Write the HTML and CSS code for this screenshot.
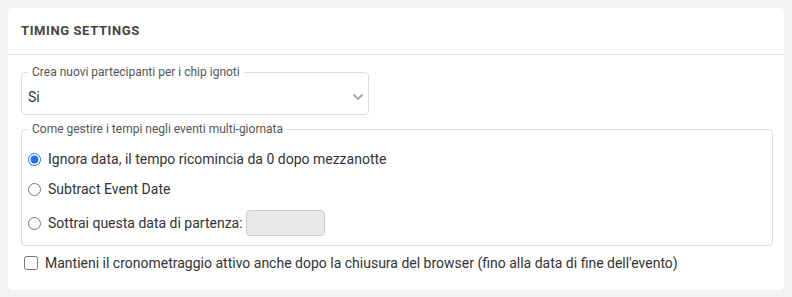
FILE: index.html
```html
<!DOCTYPE html>
<html>

<head>
    <meta charset="UTF-8">
    <title>Timing Settings</title>
    <link rel="stylesheet" href="styles.css">
</head>

<body>
    <div class="card">
        <div class="card-header">Timing Settings</div>
        <div class="card-body">
            <fieldset class="group group-select">
                <legend>Crea nuovi partecipanti per i chip ignoti</legend>
                <div class="select-wrap">
                    <select class="select">
                        <option>Si</option>
                        <option>No</option>
                    </select>
                    <svg class="chevron" width="12" height="8" viewBox="0 0 12 8">
                        <path d="M1.5 1.5 L6 6 L10.5 1.5" fill="none" stroke="#a5a5a5" stroke-width="1.8" />
                    </svg>
                </div>
            </fieldset>

            <fieldset class="group group-radio">
                <legend>Come gestire i tempi negli eventi multi-giornata</legend>
                <label class="option">
                    <input type="radio" name="multiday" checked>
                    <span>Ignora data, il tempo ricomincia da 0 dopo mezzanotte</span>
                </label>
                <label class="option">
                    <input type="radio" name="multiday">
                    <span>Subtract Event Date</span>
                </label>
                <label class="option option-date">
                    <input type="radio" name="multiday">
                    <span>Sottrai questa data di partenza:</span>
                    <input type="text" class="date-input" disabled>
                </label>
            </fieldset>

            <label class="check">
                <input type="checkbox">
                <span>Mantieni il cronometraggio attivo anche dopo la chiusura del browser (fino alla data di fine dell'evento)</span>
            </label>
        </div>
    </div>
</body>

</html>
```

FILE: styles.css
```css
body {
    margin: 8px;
    background-color: #f3f3f3;
    font-family: Roboto, "Liberation Sans", sans-serif;
    font-size: 14px;
    color: #333;
}

.card {
    background-color: #fff;
    border-radius: 4px;
    box-shadow: 0 1px 2px rgba(0, 0, 0, 0.08);
}

.card-header {
    padding: 13px 13px;
    line-height: 20px;
    font-size: 13px;
    font-weight: bold;
    text-transform: uppercase;
    letter-spacing: 0.6px;
    color: #444;
    border-bottom: 1px solid #e8e8e8;
}

.card-body {
    padding: 11px 11px 19px 13px;
}

.group {
    margin: 0;
    padding: 0 6px;
    border: 1px solid #ddd;
    border-radius: 4px;
}

.group legend {
    padding: 0 4px;
    font-size: 12px;
    line-height: 13px;
    color: #555;
}

.group-select {
    width: 334px;
}

.select-wrap {
    display: flex;
    align-items: center;
    justify-content: space-between;
    height: 35px;
}

.select {
    appearance: none;
    border: 0;
    padding: 0;
    background: transparent;
    font-family: inherit;
    font-size: 14px;
    color: #333;
    flex: 1;
    outline: none;
}

.chevron {
    margin-right: -2px;
}

.group-radio {
    margin-top: 8px;
    padding-top: 8px;
    padding-bottom: 7px;
}

.option {
    display: flex;
    align-items: center;
    gap: 7px;
    min-height: 30px;
}

.option input[type="radio"] {
    margin: 0;
    accent-color: #1a73e8;
}

.option-date {
    margin-top: 4px;
}

.date-input {
    width: 79px;
    height: 26px;
    box-sizing: border-box;
    margin-left: -4px;
    border: 1px solid #ccc;
    border-radius: 4px;
    background-color: #e9e9e9;
}

.check {
    display: flex;
    align-items: center;
    gap: 7px;
    margin-top: 9px;
    margin-left: 3px;
}

.check input {
    margin: 0;
    width: 14px;
    height: 14px;
}
```
